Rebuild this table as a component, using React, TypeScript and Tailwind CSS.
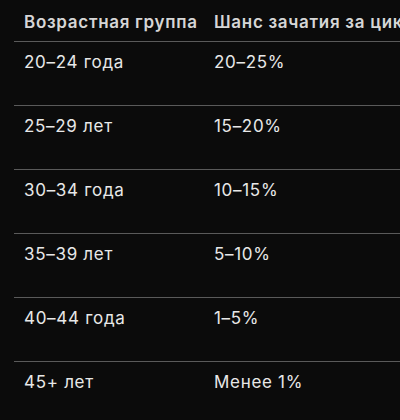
const rows = [
  ["20–24 года", "20–25%"],
  ["25–29 лет", "15–20%"],
  ["30–34 года", "10–15%"],
  ["35–39 лет", "5–10%"],
  ["40–44 года", "1–5%"],
  ["45+ лет", "Менее 1%"],
];

export default function App() {
  return (
    <div className="w-[400px] h-[420px] overflow-hidden bg-[#0b0b0b] font-['Inter',sans-serif] text-[17px] tracking-[0.7px]">
      <table className="ml-[14px] w-[500px] table-fixed border-collapse text-left">
        <colgroup>
          <col className="w-[190px]" />
          <col />
        </colgroup>
        <thead>
          <tr className="border-b border-[#5a5a5a]">
            <th className="pl-[10px] pt-[10px] pb-[7px] leading-6 font-semibold text-[#d6d6d6] whitespace-nowrap">
              Возрастная группа
            </th>
            <th className="pl-[10px] pt-[10px] pb-[7px] leading-6 font-semibold text-[#d6d6d6] whitespace-nowrap">
              Шанс зачатия за цикл
            </th>
          </tr>
        </thead>
        <tbody>
          {rows.map(([age, chance], i) => (
            <tr
              key={age}
              className={i < rows.length - 1 ? "border-b border-[#5a5a5a]" : ""}
            >
              <td className="pl-[10px] pt-[8px] pb-[31px] leading-6 text-[#e8e8e8]">
                {age}
              </td>
              <td className="pl-[10px] pt-[8px] pb-[31px] leading-6 text-[#e8e8e8]">
                {chance}
              </td>
            </tr>
          ))}
        </tbody>
      </table>
    </div>
  );
}
